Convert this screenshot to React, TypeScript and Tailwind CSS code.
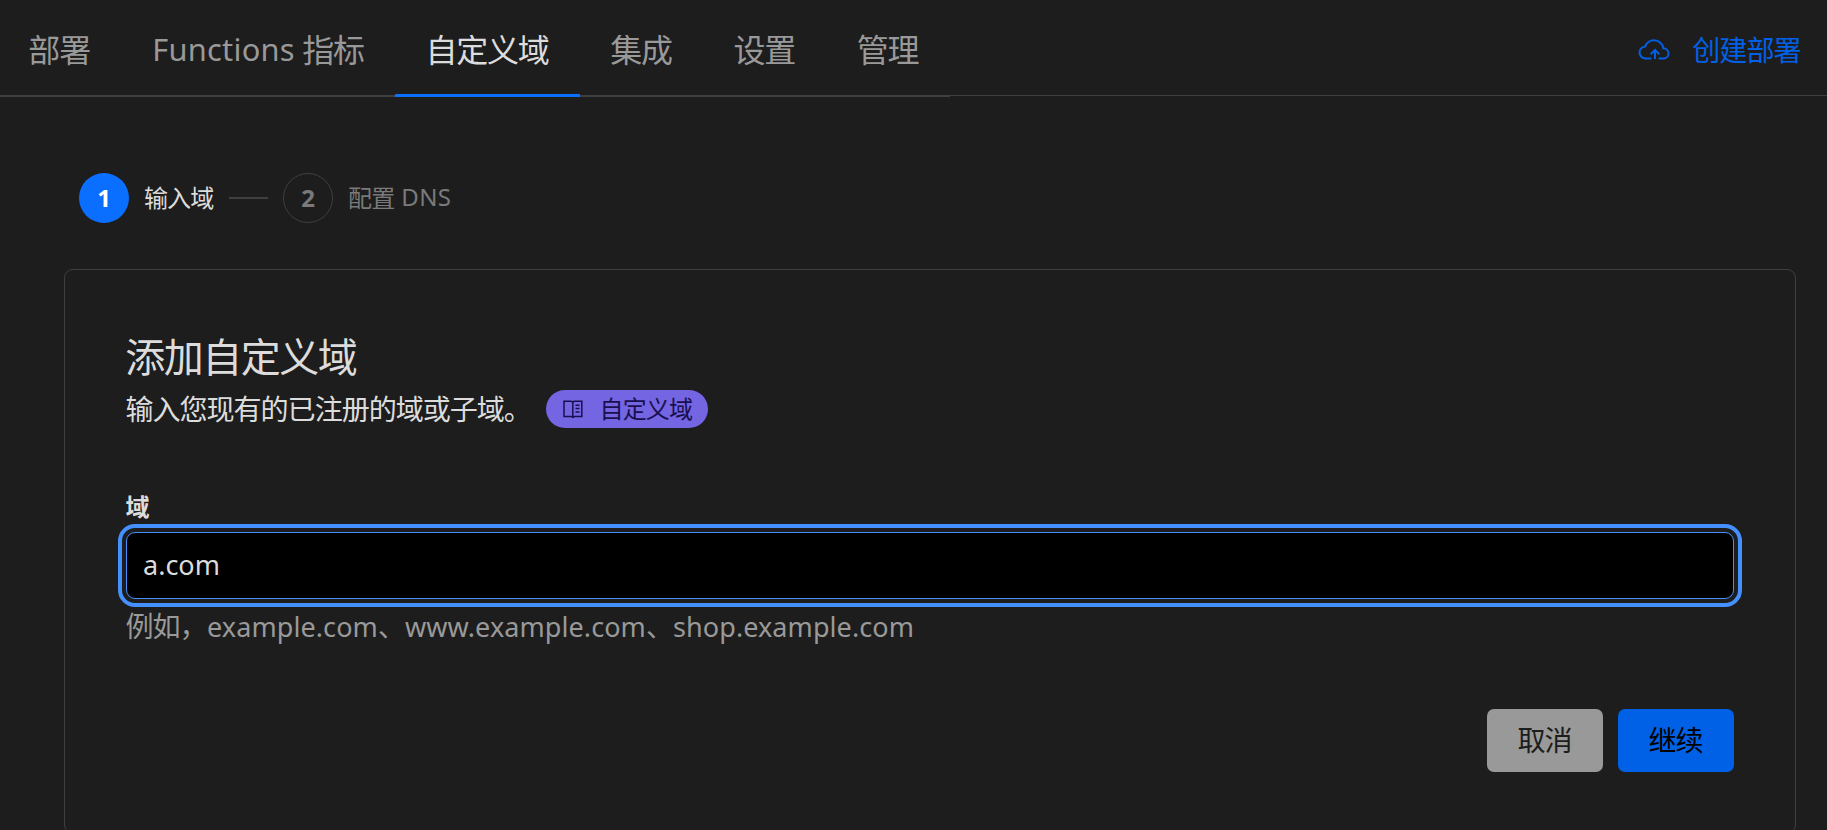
import React, { type ReactNode } from "react";

type Tab = { id: string; latin?: string; text: string };

const tabs: Tab[] = [
  { id: "deployments", text: "部署" },
  { id: "metrics", latin: "Functions", text: "指标" },
  { id: "domains", text: "自定义域" },
  { id: "integrations", text: "集成" },
  { id: "settings", text: "设置" },
  { id: "manage", text: "管理" },
];
const ACTIVE_TAB = "domains";

/* Han glyphs set slightly larger on an unchanged advance width. */
function Han({ children }: { children: ReactNode }) {
  return <span className="-ml-[0.02em] mr-[0.02em] text-[1.04em] tracking-[-0.0375em] whitespace-nowrap">{children}</span>;
}

function CloudUploadIcon() {
  return (
    <svg width="32" height="22" viewBox="0 0 32 22" fill="none" stroke="currentColor" strokeWidth="2" className="shrink-0">
      <path d="M13.4 19.4H7.4C4.2 19.4 1.5 16.900 1.500 13.600C1.500 10.400 4 7.800 7.300 7.600C8.300 3.900 11.900 1.300 16 1.300C21 1.300 25 4.900 25.300 9.300C28.300 9.500 30.500 11.700 30.500 14.400C30.500 17.200 28.300 19.400 25.500 19.400H20.600" />
      <path d="M17 20V11.300M12.700 15.200L17 10.900L21.300 15.200" />
    </svg>
  );
}

function BookIcon() {
  return (
    <svg width="20" height="19" viewBox="0 0 20 19" fill="none" stroke="currentColor" strokeWidth="1.5" className="shrink-0">
      <path d="M9.800 3C9.800 1.900 9 1.300 7.900 1.300H1V16.500H8.300C9 16.500 9.200 17.600 9.800 17.600C10.400 17.600 10.600 16.500 11.300 16.500H18.800V1.300H11.700C10.600 1.300 9.800 1.900 9.800 3ZM9.800 3V17.500" />
      <path d="M12.500 5.300H16.500M12.500 8.600H16.500M12.500 12H16.500" />
    </svg>
  );
}

function TabBar() {
  return (
    <header className="flex h-[97px] items-start justify-between bg-[linear-gradient(#3f3f3f,#3f3f3f)] bg-[length:100%_1px] bg-[position:0_95px] bg-no-repeat">
      <nav className="flex h-[97px] text-[30.8px] leading-[46px]">
        {tabs.map((tab) => (
          <a
            key={tab.id}
            className={
              tab.id === ACTIVE_TAB
                ? "border-b-[3px] border-[#0a6fff] px-[30.8px] pt-[27px] text-[#dcdcdc] whitespace-nowrap"
                : "border-b-2 border-[#3f3f3f] px-[30.8px] pt-[27px] text-[#999999] whitespace-nowrap first:pl-[29px]"
            }
          >
            {tab.latin && <span className="mr-[8px] inline-block -translate-y-px tracking-[0.25px]">{tab.latin}</span>}
            <Han>{tab.text}</Han>
          </a>
        ))}
      </nav>
      <button className="flex items-center gap-[23px] pt-[30px] pr-[26px] text-[27px] leading-[40px] text-[#0060e6]">
        <CloudUploadIcon />
        <Han>创建部署</Han>
      </button>
    </header>
  );
}

function Stepper() {
  return (
    <div className="mt-[76px] ml-[79px] flex h-[50px] items-center text-[23.1px] leading-[34px]">
      <span className="flex size-[50px] items-center justify-center rounded-full bg-[#0a6fff] text-[24px] font-bold text-white">1</span>
      <span className="-mt-px ml-[15.4px] text-[#dcdcdc]">
        <Han>输入域</Han>
      </span>
      <span className="mr-[15px] ml-[15.4px] h-[2px] w-[39px] bg-[#3f3f3f]" />
      <span className="flex size-[50px] items-center justify-center rounded-full border border-[#3f3f3f] text-[24px] font-bold text-[#7a7a7a]">2</span>
      <span className="-mt-px ml-[15.4px] text-[#7a7a7a]">
        <Han>配置</Han>
        <span className="ml-[6.5px] inline-block -translate-y-px text-[24px] tracking-[0.4px]">DNS</span>
      </span>
    </div>
  );
}

function DomainCard() {
  return (
    <section className="mt-[46px] mr-[31px] ml-[64px] h-[565px] rounded-[9px] border border-[#3f3f3f] px-[61px] pt-[58px] text-[27px] text-[#dcdcdc]">
      <h1 className="text-[38.5px] leading-[58px]">
        <Han>添加自定义域</Han>
      </h1>
      <div className="mt-[4px] flex h-[38px] items-center">
        <p className="w-[405px] leading-[37px] whitespace-nowrap">
          <Han>输入您现有的已注册的域或子域。</Han>
        </p>
        <a className="ml-[15px] flex h-[38px] w-[162px] items-center gap-[17px] rounded-full bg-[#7465e3] pl-[17px] text-[23.1px] whitespace-nowrap text-[#190f4f]">
          <BookIcon />
          <Han>自定义域</Han>
        </a>
      </div>
      <label htmlFor="domain" className="mt-[62px] block text-[23.1px] leading-[34px] font-bold">
        <Han>域</Han>
      </label>
      <input
        id="domain"
        type="text"
        defaultValue="a.com"
        className="mt-[8px] block h-[67px] w-full rounded-[9px] border border-[#4590ff] bg-black px-[16px] pb-[2px] outline-4 outline-offset-4 outline-[#4590ff]"
      />
      <p className="mt-[7px] leading-[40px] tracking-[0.08px] text-[#999999]">
        <Han>例如，</Han>example.com、www.example.com、shop.example.com
      </p>
      <div className="mt-[62px] flex justify-end gap-[15px]">
        <button className="h-[63px] w-[116px] rounded-[7px] bg-[#999999] text-[#1d1d1d]">
          <Han>取消</Han>
        </button>
        <button className="h-[63px] w-[116px] rounded-[7px] bg-[#0060e6] text-black">
          <Han>继续</Han>
        </button>
      </div>
    </section>
  );
}

export default function App() {
  return (
    <main className="h-[830px] overflow-hidden bg-[#1d1d1d] font-['Noto_Sans','Noto_Sans_CJK_SC',sans-serif]">
      <TabBar />
      <Stepper />
      <DomainCard />
    </main>
  );
}
